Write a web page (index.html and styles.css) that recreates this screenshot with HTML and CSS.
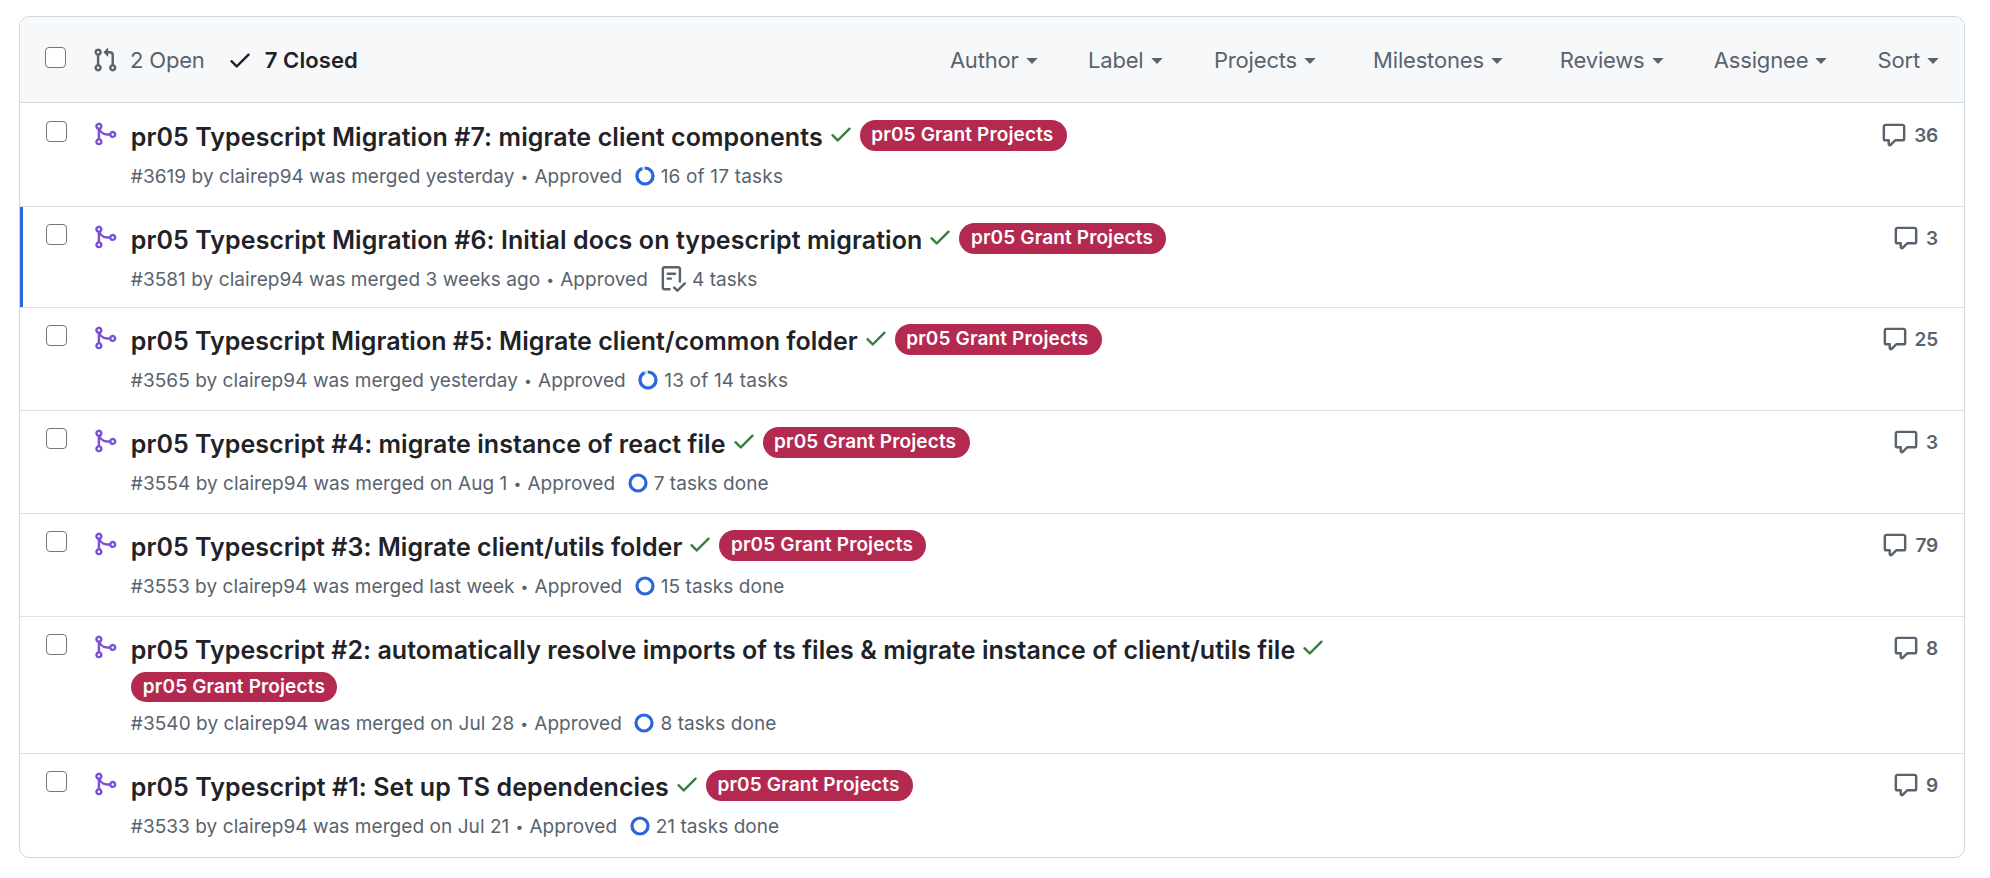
FILE: index.html
```
<!DOCTYPE html>
<html lang="en">
<head>
<meta charset="utf-8">
<title>Pull requests</title>
<link rel="stylesheet" href="styles.css">
</head>
<body>
<svg class="sprite" aria-hidden="true">
  <symbol id="pr" viewBox="0 0 16 16"><path d="M1.5 3.25a2.25 2.25 0 1 1 3 2.122v5.256a2.251 2.251 0 1 1-1.5 0V5.372A2.25 2.25 0 0 1 1.5 3.25Zm5.677-.177L9.573.677A.25.25 0 0 1 10 .854V2.5h1A2.5 2.5 0 0 1 13.5 5v5.628a2.251 2.251 0 1 1-1.5 0V5a1 1 0 0 0-1-1h-1v1.646a.25.25 0 0 1-.427.177L7.177 3.427a.25.25 0 0 1 0-.354ZM3.75 2.5a.75.75 0 1 0 0 1.5.75.75 0 0 0 0-1.5Zm0 9.5a.75.75 0 1 0 0 1.5.75.75 0 0 0 0-1.5Zm8.25.75a.75.75 0 1 0 1.5 0 .75.75 0 0 0-1.5 0Z"/></symbol>
  <symbol id="merge" viewBox="0 0 16 16"><path d="M5.45 5.154A4.25 4.25 0 0 0 9.25 7.5h1.378a2.251 2.251 0 1 1 0 1.5H9.25A5.734 5.734 0 0 1 5 7.123v3.505a2.25 2.25 0 1 1-1.5 0V5.372a2.25 2.25 0 1 1 1.95-.218ZM4.25 13.5a.75.75 0 1 0 0-1.5.75.75 0 0 0 0 1.5Zm8.5-4.5a.75.75 0 1 0 0-1.5.75.75 0 0 0 0 1.5ZM5 3.25a.75.75 0 1 0 0 .005V3.25Z"/></symbol>
  <symbol id="check" viewBox="0 0 16 16"><path d="M13.78 4.22a.75.75 0 0 1 0 1.06l-7.25 7.25a.75.75 0 0 1-1.06 0L2.22 9.28a.751.751 0 0 1 .018-1.042.751.751 0 0 1 1.042-.018L6 10.94l6.72-6.72a.75.75 0 0 1 1.06 0Z"/></symbol>
  <symbol id="comment" viewBox="0 0 16 16"><path d="M1 2.75C1 1.784 1.784 1 2.75 1h10.5c.966 0 1.75.784 1.75 1.75v7.5A1.75 1.75 0 0 1 13.25 12H9.06l-2.573 2.573A1.458 1.458 0 0 1 4 13.543V12H2.75A1.75 1.75 0 0 1 1 10.25Zm1.75-.25a.25.25 0 0 0-.25.25v7.5c0 .138.112.25.25.25h2a.75.75 0 0 1 .75.75v2.19l2.72-2.72a.749.749 0 0 1 .53-.22h4.5a.25.25 0 0 0 .25-.25v-7.5a.25.25 0 0 0-.25-.25Z"/></symbol>
  <symbol id="checklist" viewBox="0 0 16 16"><path d="M2.5 1.75v11.5c0 .138.112.25.25.25h3.17a.75.75 0 0 1 0 1.5H2.75A1.75 1.75 0 0 1 1 13.25V1.75C1 .784 1.784 0 2.75 0h8.5C12.216 0 13 .784 13 1.75v7.736a.75.75 0 0 1-1.5 0V1.75a.25.25 0 0 0-.25-.25h-8.5a.25.25 0 0 0-.25.25Zm13.274 9.537v-.001l-4.557 4.45a.75.75 0 0 1-1.055-.008l-1.943-1.95a.75.75 0 0 1 1.062-1.058l1.419 1.425 4.026-3.932a.75.75 0 1 1 1.048 1.074ZM4.75 4h4.5a.75.75 0 0 1 0 1.5h-4.5a.75.75 0 0 1 0-1.5ZM4 7.75A.75.75 0 0 1 4.75 7h2a.75.75 0 0 1 0 1.5h-2A.75.75 0 0 1 4 7.75Z"/></symbol>
  <symbol id="caret" viewBox="0 0 12 6"><path d="M.3 0h11.4L6 6Z"/></symbol>
</svg>

<main class="box">
  <header class="head">
    <input type="checkbox" class="select" aria-label="Select all">
    <nav class="states">
      <a class="state"><svg class="icon"><use href="#pr"/></svg>2 Open</a>
      <a class="state state-current"><svg class="icon"><use href="#check"/></svg>7 Closed</a>
    </nav>
    <div class="filters">
      <span class="filter">Author<svg class="caret"><use href="#caret"/></svg></span>
      <span class="filter">Label<svg class="caret"><use href="#caret"/></svg></span>
      <span class="filter filter-wide">Projects<svg class="caret"><use href="#caret"/></svg></span>
      <span class="filter filter-wide">Milestones<svg class="caret"><use href="#caret"/></svg></span>
      <span class="filter">Reviews<svg class="caret"><use href="#caret"/></svg></span>
      <span class="filter">Assignee<svg class="caret"><use href="#caret"/></svg></span>
      <span class="filter">Sort<svg class="caret"><use href="#caret"/></svg></span>
    </div>
  </header>

  <article class="row">
    <input type="checkbox" class="select" aria-label="Select">
    <svg class="icon merged"><use href="#merge"/></svg>
    <div class="body">
      <div class="title-line"><a class="title">pr05 Typescript Migration #7: migrate client components</a><svg class="icon passed"><use href="#check"/></svg><span class="label">pr05 Grant Projects</span></div>
      <div class="meta"><span>#3619 by clairep94 was merged yesterday</span><span class="dot">•</span><span>Approved</span><svg class="ring" viewBox="0 0 20 20"><circle class="ring-rest" cx="10" cy="10" r="8"/><circle class="ring-done" cx="10" cy="10" r="8" pathLength="17" stroke-dasharray="16 1"/></svg><span class="progress">16 of 17 tasks</span></div>
    </div>
    <a class="comments"><svg class="icon"><use href="#comment"/></svg>36</a>
  </article>

  <article class="row row-focused">
    <input type="checkbox" class="select" aria-label="Select">
    <svg class="icon merged"><use href="#merge"/></svg>
    <div class="body">
      <div class="title-line"><a class="title">pr05 Typescript Migration #6: Initial docs on typescript migration</a><svg class="icon passed"><use href="#check"/></svg><span class="label">pr05 Grant Projects</span></div>
      <div class="meta"><span>#3581 by clairep94 was merged 3 weeks ago</span><span class="dot">•</span><span>Approved</span><svg class="icon tasklist"><use href="#checklist"/></svg><span>4 tasks</span></div>
    </div>
    <a class="comments"><svg class="icon"><use href="#comment"/></svg>3</a>
  </article>

  <article class="row">
    <input type="checkbox" class="select" aria-label="Select">
    <svg class="icon merged"><use href="#merge"/></svg>
    <div class="body">
      <div class="title-line"><a class="title title-tight">pr05 Typescript Migration #5: Migrate client/common folder</a><svg class="icon passed"><use href="#check"/></svg><span class="label">pr05 Grant Projects</span></div>
      <div class="meta"><span>#3565 by clairep94 was merged yesterday</span><span class="dot">•</span><span>Approved</span><svg class="ring" viewBox="0 0 20 20"><circle class="ring-rest" cx="10" cy="10" r="8"/><circle class="ring-done" cx="10" cy="10" r="8" pathLength="14" stroke-dasharray="13 1"/></svg><span class="progress">13 of 14 tasks</span></div>
    </div>
    <a class="comments"><svg class="icon"><use href="#comment"/></svg>25</a>
  </article>

  <article class="row">
    <input type="checkbox" class="select" aria-label="Select">
    <svg class="icon merged"><use href="#merge"/></svg>
    <div class="body">
      <div class="title-line"><a class="title title-snug">pr05 Typescript #4: migrate instance of react file</a><svg class="icon passed"><use href="#check"/></svg><span class="label">pr05 Grant Projects</span></div>
      <div class="meta"><span>#3554 by clairep94 was merged on Aug 1</span><span class="dot">•</span><span>Approved</span><svg class="ring" viewBox="0 0 20 20"><circle class="ring-done" cx="10" cy="10" r="8"/></svg><span>7 tasks done</span></div>
    </div>
    <a class="comments"><svg class="icon"><use href="#comment"/></svg>3</a>
  </article>

  <article class="row">
    <input type="checkbox" class="select" aria-label="Select">
    <svg class="icon merged"><use href="#merge"/></svg>
    <div class="body">
      <div class="title-line"><a class="title title-snug">pr05 Typescript #3: Migrate client/utils folder</a><svg class="icon passed"><use href="#check"/></svg><span class="label">pr05 Grant Projects</span></div>
      <div class="meta"><span>#3553 by clairep94 was merged last week</span><span class="dot">•</span><span>Approved</span><svg class="ring" viewBox="0 0 20 20"><circle class="ring-done" cx="10" cy="10" r="8"/></svg><span>15 tasks done</span></div>
    </div>
    <a class="comments"><svg class="icon"><use href="#comment"/></svg>79</a>
  </article>

  <article class="row row-wrapped">
    <input type="checkbox" class="select" aria-label="Select">
    <svg class="icon merged"><use href="#merge"/></svg>
    <div class="body">
      <div class="title-line"><a class="title title-snug">pr05 Typescript #2: automatically resolve imports of ts files &amp; migrate instance of client/utils file</a><svg class="icon passed"><use href="#check"/></svg></div>
      <div class="label-line"><span class="label">pr05 Grant Projects</span></div>
      <div class="meta"><span>#3540 by clairep94 was merged on Jul 28</span><span class="dot">•</span><span>Approved</span><svg class="ring" viewBox="0 0 20 20"><circle class="ring-done" cx="10" cy="10" r="8"/></svg><span>8 tasks done</span></div>
    </div>
    <a class="comments"><svg class="icon"><use href="#comment"/></svg>8</a>
  </article>

  <article class="row">
    <input type="checkbox" class="select" aria-label="Select">
    <svg class="icon merged"><use href="#merge"/></svg>
    <div class="body">
      <div class="title-line"><a class="title">pr05 Typescript #1: Set up TS dependencies</a><svg class="icon passed"><use href="#check"/></svg><span class="label">pr05 Grant Projects</span></div>
      <div class="meta"><span>#3533 by clairep94 was merged on Jul 21</span><span class="dot">•</span><span>Approved</span><svg class="ring" viewBox="0 0 20 20"><circle class="ring-done" cx="10" cy="10" r="8"/></svg><span>21 tasks done</span></div>
    </div>
    <a class="comments"><svg class="icon"><use href="#comment"/></svg>9</a>
  </article>
</main>
</body>
</html>
```
FILE: styles.css
```
* { box-sizing: border-box; }

body {
  margin: 0;
  padding: 16px 25px 20px 19px;
  background: #fff;
  color: #1f2328;
  font-family: Inter, "Liberation Sans", sans-serif;
}

.sprite { display: none; }

.icon {
  width: 26px;
  height: 26px;
  flex: none;
  fill: currentColor;
}

.box {
  height: 842px;
  border: 1px solid #d1d9e0;
  border-radius: 10px;
  overflow: hidden;
}

.select {
  appearance: none;
  flex: none;
  width: 21px;
  height: 21px;
  margin: 0;
  border: 1.4px solid #767676;
  border-radius: 4px;
  background: #fff;
}

/* Header */
.head {
  display: flex;
  height: 86px;
  padding: 0 25px;
  border-bottom: 1px solid #d1d9e0;
  background: #f6f8fa;
  color: #59636e;
  font-size: 22px;
  letter-spacing: -0.18px;
}

.head .select { margin-top: 30px; }

.states {
  display: flex;
  align-items: center;
  margin-left: 26px;
  gap: 22px;
}

.state {
  display: flex;
  align-items: center;
  gap: 12px;
}

.state-current {
  color: #1f2328;
  font-weight: 600;
  letter-spacing: 0.1px;
}

.filters {
  display: flex;
  align-items: center;
  margin-left: auto;
}

.filter {
  display: flex;
  align-items: center;
  gap: 7px;
  margin-left: 50.3px;
}

.filter-wide,
.filter-wide + .filter { margin-left: 57px; }

.filter:not(.filter-wide) + .filter-wide { margin-left: 51.5px; }

.caret {
  width: 12px;
  height: 6px;
  margin-top: 3px;
  fill: currentColor;
}

/* Rows */
.row {
  display: flex;
  align-items: flex-start;
  height: 103px;
  padding: 16px 26px 0;
  border-bottom: 1px solid #dde2e8;
}

.row:nth-of-type(1) {
  height: 104px;
  padding-top: 17px;
}

.row:last-child { border-bottom: 0; }

.row-focused {
  height: 101px;
  box-shadow: inset 3px 0 0 #2b67d8;
}

.row-wrapped { height: 137px; }

.row .select { margin-top: 1px; }

.merged {
  margin: 1px 0 0 25px;
  color: #7b50d8;
}

.body { margin-left: 12.8px; }

.title-line {
  display: flex;
  align-items: flex-start;
  height: 32px;
}

.title {
  margin-top: 1px;
  font-size: 25px;
  font-weight: 600;
  line-height: 32px;
  letter-spacing: 0.085px;
  white-space: nowrap;
}

.title-snug { letter-spacing: 0.045px; }
.title-tight { letter-spacing: 0.03px; }

.passed {
  margin: 1px 6px 0 5px;
  color: #3a7d40;
}

.label {
  width: 207px;
  height: 31px;
  padding-left: 12px;
  border-radius: 16px;
  background: #b42950;
  color: #fff;
  font-size: 19px;
  font-weight: 600;
  line-height: 30px;
  letter-spacing: 0.14px;
  white-space: nowrap;
}

.title-line .label { padding-left: 11.5px; }

.label-line {
  display: flex;
  padding-top: 7px;
}

.label-line .label {
  width: 206px;
  height: 30px;
}

.meta {
  display: flex;
  align-items: center;
  height: 26px;
  margin-top: 11px;
  color: #59636e;
  font-size: 19px;
  letter-spacing: 0.06px;
  white-space: nowrap;
}

.label-line + .meta { margin-top: 8px; }

.progress { letter-spacing: 0.18px; }

.dot {
  width: 20px;
  font-size: 14px;
  text-align: center;
}

.ring {
  width: 20px;
  height: 20px;
  margin: 0 6px 0 12.5px;
  fill: none;
  stroke-width: 3.2;
  transform: rotate(-90deg);
}

.ring-rest { stroke: #bcd6f7; }
.ring-done { stroke: #2b67d8; }

.tasklist { margin: -1px 6px 0 12px; }

.comments {
  display: flex;
  align-items: center;
  height: 30px;
  gap: 7px;
  margin-left: auto;
  color: #59636e;
  font-size: 19px;
  font-weight: 600;
  letter-spacing: -0.2px;
}
```
